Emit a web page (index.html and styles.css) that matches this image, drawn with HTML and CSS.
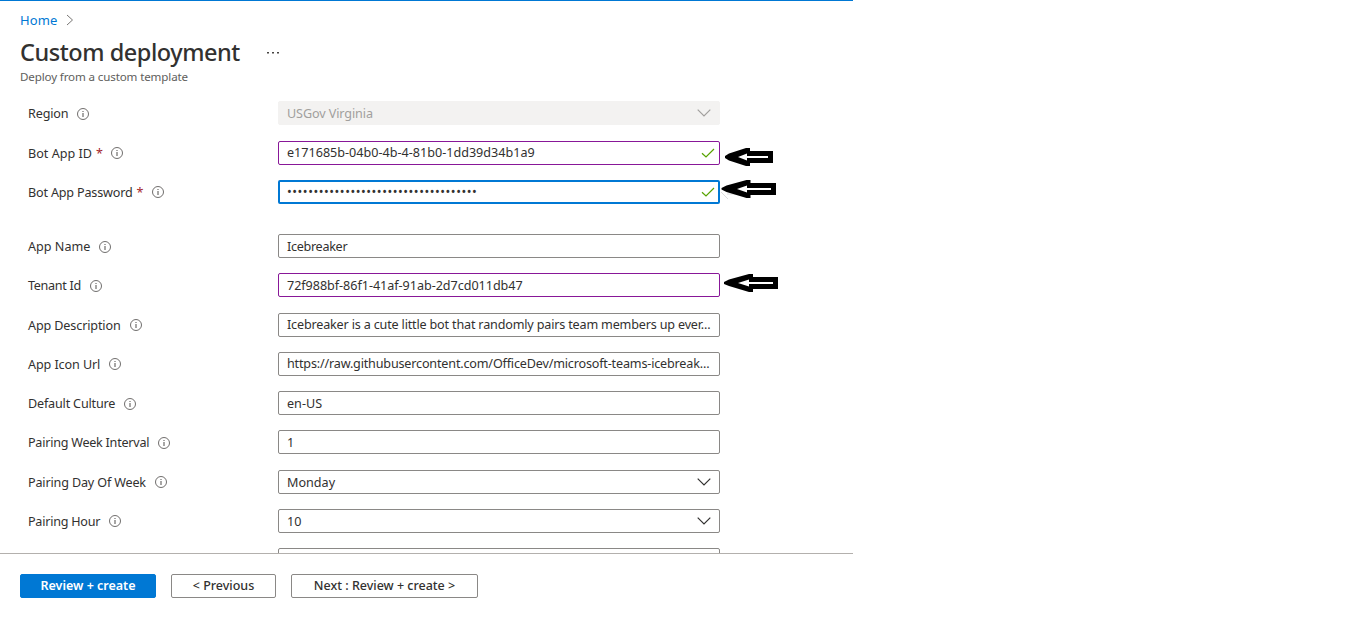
FILE: index.html
```
<!DOCTYPE html>
<html lang="en">
<head>
<meta charset="utf-8">
<title>Custom deployment</title>
<link rel="stylesheet" href="styles.css">
</head>
<body>
<svg class="defs" width="0" height="0">
  <symbol id="info" viewBox="0 0 12 12"><circle cx="6" cy="6" r="5.5" fill="none" stroke="#605e5c" stroke-width=".9"/><path d="M6 5v4M6 2.900v1.200" stroke="#605e5c" stroke-width="1.1"/></symbol>
  <symbol id="down" viewBox="0 0 14 8"><path d="M.7.7 7 7 13.300.7" fill="none" stroke="currentColor" stroke-width="1.2"/></symbol>
  <symbol id="check" viewBox="0 0 14 10"><path d="M1 5.200 5 9 13 1" fill="none" stroke="#57a300" stroke-width="1.2"/></symbol>
</svg>
<div class="blade">
  <nav class="crumbs"><a class="home"><span>Home</span></a><svg width="8" height="12" viewBox="0 0 8 12"><path d="M1 1l5.500 5L1 11" fill="none" stroke="#797775" stroke-width="1"/></svg></nav>
  <header class="head"><h1><span>Custom deployment</span></h1><svg width="12" height="4" viewBox="0 0 12 4"><path d="M0 1h2v1.500H0zM5 1h2v1.500H5zM10 1h2v1.500h-2z" fill="#484644"/></svg></header>
  <p class="sub"><span>Deploy from a custom template</span></p>
  <main class="form">
    <div class="row low"><label><span class="l1">Region</span><svg class="info"><use href="#info"/></svg></label><div class="field off"><span class="f1">USGov Virginia</span><svg class="down"><use href="#down"/></svg></div></div>
    <div class="row g16"><label><span class="l2">Bot App ID</span><b>*</b><svg class="info"><use href="#info"/></svg></label><div class="field edited"><span class="f2">e171685b-04b0-4b-4-81b0-1dd39d34b1a9</span><svg class="check"><use href="#check"/></svg></div></div>
    <div class="row"><label><span class="l3">Bot App Password</span><b>*</b><svg class="info"><use href="#info"/></svg></label><div class="field focus"><span class="f3">••••••••••••••••••••••••••••••••••••</span><svg class="check"><use href="#check"/></svg></div></div>
    <div class="row g30 low"><label><span class="l4">App Name</span><svg class="info"><use href="#info"/></svg></label><div class="field"><span class="f4">Icebreaker</span></div></div>
    <div class="row low"><label><span class="l5">Tenant Id</span><svg class="info"><use href="#info"/></svg></label><div class="field edited"><span class="f5">72f988bf-86f1-41af-91ab-2d7cd011db47</span></div></div>
    <div class="row g16"><label><span class="l6">App Description</span><svg class="info"><use href="#info"/></svg></label><div class="field"><span class="f6">Icebreaker is a cute little bot that randomly pairs team members up ever...</span></div></div>
    <div class="row"><label><span class="l7">App Icon Url</span><svg class="info"><use href="#info"/></svg></label><div class="field"><span class="f7">https://raw.githubusercontent.com/OfficeDev/microsoft-teams-icebreak...</span></div></div>
    <div class="row low"><label><span class="l8">Default Culture</span><svg class="info"><use href="#info"/></svg></label><div class="field"><span class="f8">en-US</span></div></div>
    <div class="row low"><label><span class="l9">Pairing Week Interval</span><svg class="info"><use href="#info"/></svg></label><div class="field"><span class="f9">1</span></div></div>
    <div class="row g16"><label><span class="l10">Pairing Day Of Week</span><svg class="info"><use href="#info"/></svg></label><div class="field drop"><span class="f10">Monday</span><svg class="down"><use href="#down"/></svg></div></div>
    <div class="row"><label><span class="l11">Pairing Hour</span><svg class="info"><use href="#info"/></svg></label><div class="field drop"><span class="f11">10</span><svg class="down"><use href="#down"/></svg></div></div>
    <div class="row"><label></label><div class="field"></div></div>
  </main>
  <footer class="actions"><button class="primary"><span>Review + create</span></button><button class="prev"><span>&lt; Previous</span></button><button class="next"><span>Next : Review + create &gt;</span></button></footer>
</div>
<svg class="arrows" width="70" height="160" viewBox="715 140 70 160">
  <path d="M721 192l7 7M727 194h9" stroke="#ddd" fill="none"/>
  <path d="M725 156l4-2.500 17-5.500h4v3h23v12h-23v3h-4l-17-5.500-4-2.500z"/>
  <path d="M738 157l9-3.500v2.500h21v2h-21v2.500z" fill="#fff"/>
  <path d="M721.500 188l5-2.500 20-5.500h4v3H776v12h-25.500v3h-4l-20-6-5-2.500z"/>
  <path d="M737 189l10-3.500v2.500h24v2h-24v2.500z" fill="#fff"/>
  <path d="M724 282l5-2.500 20-5.500h4v3h25v12h-25v3h-4l-20-6-5-2z"/>
  <path d="M738 283l11-3.500v2.500h24v2h-24v2.500z" fill="#fff"/>
</svg>
</body>
</html>
```
FILE: styles.css
```
* { box-sizing: border-box; }
body { margin: 0; background: #fff; color: #323130; font: 12.6px/18px "Noto Sans", "Open Sans", sans-serif; height: 639px; overflow: hidden; }
.defs { position: absolute; }
.blade { width: 853px; height: 639px; border-top: 1px solid #0078d4; display: flex; flex-direction: column; }
span { white-space: nowrap; }
svg { flex: none; display: block; }
.crumbs { display: flex; align-items: center; gap: 8px; height: 38px; padding-left: 20px; color: #0078d4; }
.home { font-size: 13px; letter-spacing: .15px; }
.head { display: flex; align-items: center; gap: 26px; height: 27px; padding-left: 20px; }
h1 { margin: 0; font-size: 23.5px; line-height: 27px; font-weight: 550; width: 221px; letter-spacing: -.45px; }
.sub { margin: 0; padding: 2px 0 0 20px; height: 20px; font-size: 11.6px; color: #605e5c; letter-spacing: -.14px; }
.form { height: 467px; padding: 15px 0 0 28px; overflow: hidden; }
.row { display: flex; height: 24px; margin-top: 15px; }
.row:first-child { margin-top: 0; }
.row.g16 { margin-top: 16px; }
.row.g30 { margin-top: 30px; }
label { width: 250px; display: flex; align-items: center; }
label span { padding-top: 2px; }
label b { color: #a4262c; font-weight: 400; margin-left: 4px; width: 6px; padding-top: 2px; }
.info { width: 12px; height: 12px; margin-left: 9px; }
.low .info { margin-top: 2px; }
.field { width: 442px; height: 24px; border: 1px solid #8a8886; border-radius: 2px; padding: 0 8px; display: flex; align-items: center; justify-content: space-between; }
.low .field span, .drop span { padding-top: 2px; }
.off { background: #f3f2f1; border-color: #f3f2f1; color: #a19f9d; }
.edited { border-color: #881798; }
.focus { border: 2px solid #0078d4; padding: 0 7px; }
.down { width: 14px; height: 8px; }
.check { width: 14px; height: 10px; margin-right: -4px; }
.l1 { letter-spacing: -.15px; }
.l3 { letter-spacing: -.18px; }
.l5 { letter-spacing: -.3px; }
.l6 { letter-spacing: -.13px; }
.l7 { letter-spacing: -.1px; }
.l8 { letter-spacing: -.18px; }
.l9 { letter-spacing: -.25px; }
.l10 { letter-spacing: -.16px; }
.l11 { letter-spacing: -.25px; }
.f1 { letter-spacing: -.1px; }
.f3 { letter-spacing: .55px; }
.f4 { letter-spacing: -.3px; }
.f5 { letter-spacing: -.04px; }
.f6, .f7 { letter-spacing: -.175px; }
.actions { border-top: 1px solid #b3b0ad; display: flex; gap: 15px; padding: 20px 0 0 20px; }
button { height: 24px; padding: 0; border: 1px solid #8a8886; border-radius: 2px; background: #fff; color: #323130; font: 500 12.5px/20px "Noto Sans", "Open Sans", sans-serif; }
.primary { width: 136px; background: #0078d4; border-color: #0078d4; color: #fff; font-weight: 600; }
.prev { width: 105px; }
.next { width: 187px; }
.arrows { position: absolute; left: 715px; top: 140px; }
```
